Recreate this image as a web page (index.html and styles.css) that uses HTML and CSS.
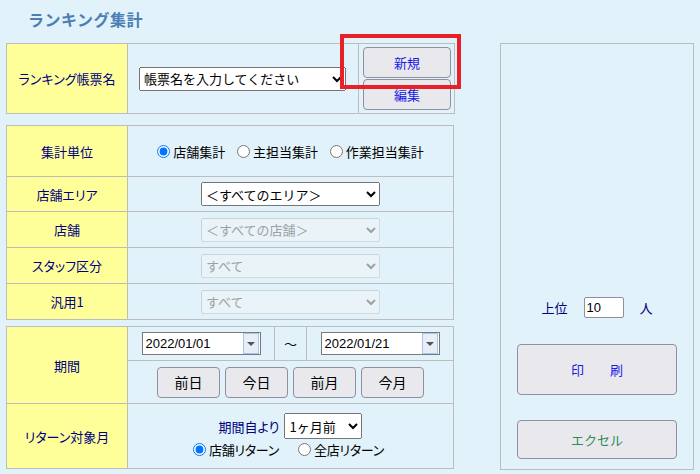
FILE: index.html
```html
<!DOCTYPE html>
<html lang="ja">
<head>
    <meta charset="UTF-8">
    <title>ランキング集計</title>
    <link rel="stylesheet" href="styles.css">
</head>
<body>
    <h1 class="title">ランキング集計</h1>

    <div class="layout">
        <div class="left">
            <table class="form-table top-table">
                <tr>
                    <td class="label">ランキング帳票名</td>
                    <td class="report-cell">
                        <select class="report-select">
                            <option>帳票名を入力してください</option>
                        </select>
                    </td>
                    <td class="btn-cell">
                        <button class="btn btn-blue btn-small">新規</button>
                        <button class="btn btn-blue btn-small">編集</button>
                    </td>
                </tr>
            </table>

            <table class="form-table cond-table">
                <tr class="row-unit">
                    <td class="label">集計単位</td>
                    <td class="center">
                        <label class="radio"><input type="radio" name="unit" checked>店舗集計</label>
                        <label class="radio"><input type="radio" name="unit">主担当集計</label>
                        <label class="radio"><input type="radio" name="unit">作業担当集計</label>
                    </td>
                </tr>
                <tr class="row-sel row-first">
                    <td class="label">店舗エリア</td>
                    <td class="center">
                        <select class="cond-select"><option>＜すべてのエリア＞</option></select>
                    </td>
                </tr>
                <tr class="row-sel">
                    <td class="label">店舗</td>
                    <td class="center">
                        <select class="cond-select" disabled><option>＜すべての店舗＞</option></select>
                    </td>
                </tr>
                <tr class="row-sel">
                    <td class="label">スタッフ区分</td>
                    <td class="center">
                        <select class="cond-select" disabled><option>すべて</option></select>
                    </td>
                </tr>
                <tr class="row-sel">
                    <td class="label">汎用1</td>
                    <td class="center">
                        <select class="cond-select" disabled><option>すべて</option></select>
                    </td>
                </tr>
            </table>

            <table class="form-table period-table">
                <tr class="row-date">
                    <td class="label" rowspan="2">期間</td>
                    <td class="date-cell">
                        <span class="datebox"><span class="date-text">2022/01/01</span><span class="drop"></span></span>
                    </td>
                    <td class="tilde">～</td>
                    <td class="date-cell">
                        <span class="datebox"><span class="date-text">2022/01/21</span><span class="drop"></span></span>
                    </td>
                </tr>
                <tr class="row-quick">
                    <td class="center" colspan="3">
                        <div class="quick-btns">
                            <button class="btn btn-quick">前日</button>
                            <button class="btn btn-quick">今日</button>
                            <button class="btn btn-quick">前月</button>
                            <button class="btn btn-quick">今月</button>
                        </div>
                    </td>
                </tr>
                <tr class="row-return">
                    <td class="label">リターン対象月</td>
                    <td class="center" colspan="3">
                        <div class="return-line">
                            <span class="navy">期間自より</span>
                            <select class="month-select"><option>1ヶ月前</option></select>
                        </div>
                        <div class="return-line return-radios">
                            <label class="radio ret-first"><input type="radio" name="ret" checked>店舗リターン</label>
                            <label class="radio"><input type="radio" name="ret">全店リターン</label>
                        </div>
                    </td>
                </tr>
            </table>
        </div>

        <div class="side-panel">
            <div class="top-n">
                <span class="navy">上位</span>
                <input type="text" class="top-input" value="10">
                <span class="navy">人</span>
            </div>
            <button class="btn btn-print">印　　刷</button>
            <button class="btn btn-excel">エクセル</button>
        </div>
    </div>

    <!-- highlight box over the 新規 button -->
    <div class="highlight"></div>
</body>
</html>
```

FILE: styles.css
```css
body {
    margin: 0;
    background-color: #e1f2fa;
    font-family: "Liberation Sans", "Noto Sans CJK JP", sans-serif;
    font-size: 13px;
    color: #000;
}

.title {
    margin: 0;
    height: 43px;
    padding-left: 28px;
    line-height: 38px;
    font-size: 16px;
    font-weight: bold;
    letter-spacing: 0.5px;
    color: #4a7eb4;
    font-family: "Noto Sans CJK JP", sans-serif;
}

.layout {
    display: flex;
    gap: 46px;
    padding-left: 6px;
}

.left {
    width: 448px;
}

/* tables */
.form-table {
    width: 448px;
    border-collapse: collapse;
    border: 1px solid #bdbdbd;
    table-layout: fixed;
}

.form-table td {
    border: 1px solid #bdbdbd;
    padding: 0;
}

.label {
    width: 120px;
    background-color: #ffff99;
    color: #000080;
    text-align: center;
    font-family: "Noto Sans CJK JP", sans-serif;
    font-size: 13px;
    font-feature-settings: "palt";
}

.center {
    text-align: center;
}

.navy {
    color: #000080;
    font-family: "Noto Sans CJK JP", sans-serif;
    font-feature-settings: "palt";
}

/* top table */
.top-table td {
    height: 69px;
}

.form-table .report-cell {
    width: 219px;
    padding-left: 11px;
}

.report-select {
    width: 207px;
    height: 24px;
    font-size: 13px;
    font-family: "Noto Sans CJK JP", sans-serif;
}

.form-table .btn-cell {
    width: 91px;
    padding-left: 4px;
}

.btn {
    background-color: #e9e9ed;
    border: 1px solid #8f8f9d;
    border-radius: 4px;
    font-family: "Noto Sans CJK JP", sans-serif;
    font-size: 13px;
    padding: 0;
    cursor: pointer;
}

.btn-small {
    display: block;
    width: 88px;
    height: 31px;
    margin: 1px 0;
}

.btn-blue {
    color: #1a1ae6;
}

/* conditions */
.cond-table {
    margin-top: 11px;
}

.row-unit td {
    height: 50px;
}

.row-sel td {
    height: 35px;
}

.row-first td {
    height: 34px;
}

.radio {
    display: inline-flex;
    align-items: center;
    font-family: "Noto Sans CJK JP", sans-serif;
    font-size: 13px;
    font-feature-settings: "palt";
    margin-left: 8px;
}

.radio:first-child {
    margin-left: 0;
}

.radio input {
    margin: 0 3px 0 0;
    width: 13px;
    height: 13px;
}

.cond-select {
    width: 179px;
    height: 24px;
    font-size: 13px;
    font-family: "Noto Sans CJK JP", sans-serif;
}

/* period */
.period-table {
    margin-top: 6px;
}

.row-date td {
    height: 33px;
}

.date-cell {
    width: 146px;
    text-align: center;
}

.tilde {
    width: 31px;
    text-align: center;
    font-size: 13px;
}

.datebox {
    display: inline-flex;
    align-items: center;
    justify-content: space-between;
    width: 117px;
    height: 21px;
    background-color: #fff;
    border: 1px solid #7a7a7a;
    vertical-align: middle;
}

.date-text {
    padding-left: 3px;
    font-size: 13px;
}

.drop {
    width: 14px;
    height: 19px;
    margin-right: 1px;
    background-color: #e8eef8;
    border: 1px solid #a9c4ec;
    position: relative;
}

.drop::after {
    content: "";
    position: absolute;
    left: 3px;
    top: 8px;
    border-left: 4px solid transparent;
    border-right: 4px solid transparent;
    border-top: 4px solid #555;
}

.row-quick td {
    height: 42px;
}

.quick-btns {
    display: flex;
    justify-content: center;
    gap: 5px;
}

.btn-quick {
    width: 63px;
    height: 31px;
    color: #000;
    font-size: 14px;
}

.row-return td {
    height: 64px;
}

.return-line {
    display: flex;
    justify-content: center;
    align-items: center;
    gap: 5px;
}

.return-radios {
    justify-content: flex-start;
    padding-left: 65px;
    margin-top: 1px;
    gap: 0;
}

.return-radios .ret-first {
    width: 105px;
}

.return-radios .radio {
    margin-left: 0;
    letter-spacing: -0.3px;
}

.month-select {
    width: 78px;
    height: 26px;
    font-size: 13px;
    font-family: "Noto Sans CJK JP", sans-serif;
}

/* side panel */
.side-panel {
    width: 192px;
    height: 415px;
    border: 1px solid #bdbdbd;
    display: flex;
    flex-direction: column;
    align-items: center;
    justify-content: flex-end;
    padding-bottom: 10px;
}

.top-n {
    display: flex;
    align-items: center;
    gap: 16px;
    margin-bottom: 26px;
    font-size: 13px;
}

.top-input {
    width: 34px;
    height: 17px;
    border: 1px solid #8f8f9d;
    border-radius: 2px;
    padding: 1px 2px;
    font-size: 13px;
    font-family: "Liberation Sans", sans-serif;
}

.btn-print {
    width: 160px;
    height: 51px;
    color: #1a1ae6;
    margin-bottom: 25px;
}

.btn-excel {
    width: 160px;
    height: 39px;
    color: #2e8b57;
}

/* red highlight box */
.highlight {
    position: absolute;
    left: 340px;
    top: 34px;
    width: 113px;
    height: 47px;
    border: 4px solid #e8202a;
}
```
